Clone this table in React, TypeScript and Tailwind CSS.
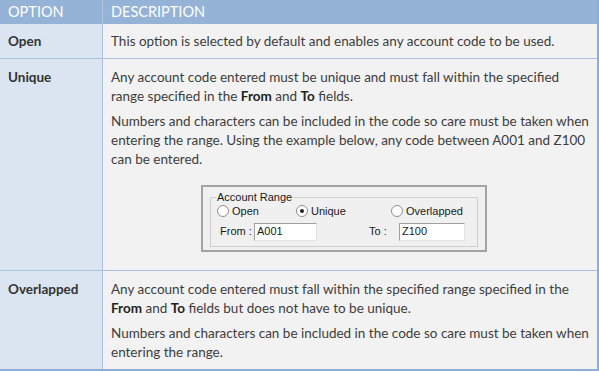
import React from "react";

function Radio({ checked, label }: { checked?: boolean; label: string }) {
  return (
    <div className="flex items-center gap-[3px]">
      <span className="flex h-[12px] w-[12px] items-center justify-center rounded-full border border-[#8f8f8f] bg-white">
        {checked && <span className="h-[4px] w-[4px] rounded-full bg-[#222]" />}
      </span>
      <span>{label}</span>
    </div>
  );
}

function AccountRange() {
  return (
    <div className="mb-[10px] ml-[90px] mt-[16px] w-[286px] border-2 border-[#a3a3a3] bg-[#f0f0f0] px-[7px] pb-[3px] pt-[10px] font-['Liberation_Sans',sans-serif] text-[11px] text-[#1a1a1a]">
      <div className="relative border border-[#cfcfcf] px-[6px] pb-[5px] pt-[5px]">
        <span className="absolute -top-[8px] left-[5px] bg-[#f0f0f0] px-[1px] leading-[14px]">
          Account Range
        </span>
        <div className="flex h-[16px] items-center">
          <div className="w-[79px]">
            <Radio label="Open" />
          </div>
          <div className="w-[95px]">
            <Radio checked label="Unique" />
          </div>
          <Radio label="Overlapped" />
        </div>
        <div className="mt-[3px] flex items-center">
          <span className="w-[37px] pl-[3px]">From :</span>
          <span className="flex h-[18px] w-[63px] items-center border border-[#a0a0a0] border-b-[#e3e3e3] border-r-[#e3e3e3] bg-white pl-[2px]">
            A001
          </span>
          <span className="ml-[52px] w-[30px]">To :</span>
          <span className="flex h-[18px] w-[66px] items-center border border-[#a0a0a0] border-b-[#e3e3e3] border-r-[#e3e3e3] bg-white pl-[2px]">
            Z100
          </span>
        </div>
      </div>
    </div>
  );
}

function Row({
  label,
  children,
  last,
  top = "pt-[9px]",
  bottom = "pb-[7px]",
}: {
  label: string;
  children: React.ReactNode;
  last?: boolean;
  top?: string;
  bottom?: string;
}) {
  return (
    <div className={last ? "flex" : "flex border-b border-[#a9c1df]"}>
      <div className={`w-[103px] shrink-0 border-r border-[#a9c1df] bg-[#dbe5f1] px-[8px] font-bold text-[#333] ${top}`}>
        {label}
      </div>
      <div className={`flex-1 bg-[#f2f2f2] pl-[8px] pr-[8px] ${top} ${bottom}`}>{children}</div>
    </div>
  );
}

export default function App() {
  return (
    <div className="h-[372px] w-[599px] bg-white font-['Lato',sans-serif] text-[13.5px] leading-[19px] text-[#3d3d3d]">
      <div className="border-b-2 border-r-2 border-[#8eaed6]">
        <div className="flex h-[24px] items-center bg-[#95b3d7] text-[14.5px] text-white">
          <div className="w-[103px] border-r border-[#b4c9e4] pl-[8px] leading-[24px]">OPTION</div>
          <div className="pl-[8px] leading-[24px]">DESCRIPTION</div>
        </div>
        <Row label="Open" top="pt-[8px]">
          <p>This option is selected by default and enables any account code to be used.</p>
        </Row>
        <Row label="Unique" bottom="pb-[8px]">
          <p>
            Any account code entered must be unique and must fall within the specified range specified in the{" "}
            <b className="text-[#222]">From</b> and <b className="text-[#222]">To</b> fields.
          </p>
          <p className="mt-[6px]">
            Numbers and characters can be included in the code so care must be taken when entering the range. Using the
            example below, any code between A001 and Z100 can be entered.
          </p>
          <AccountRange />
        </Row>
        <Row label="Overlapped" last>
          <p>
            Any account code entered must fall within the specified range specified in the{" "}
            <b className="text-[#222]">From</b> and <b className="text-[#222]">To</b> fields but does not have to be
            unique.
          </p>
          <p className="mt-[6px]">
            Numbers and characters can be included in the code so care must be taken when entering the range.
          </p>
        </Row>
      </div>
    </div>
  );
}
